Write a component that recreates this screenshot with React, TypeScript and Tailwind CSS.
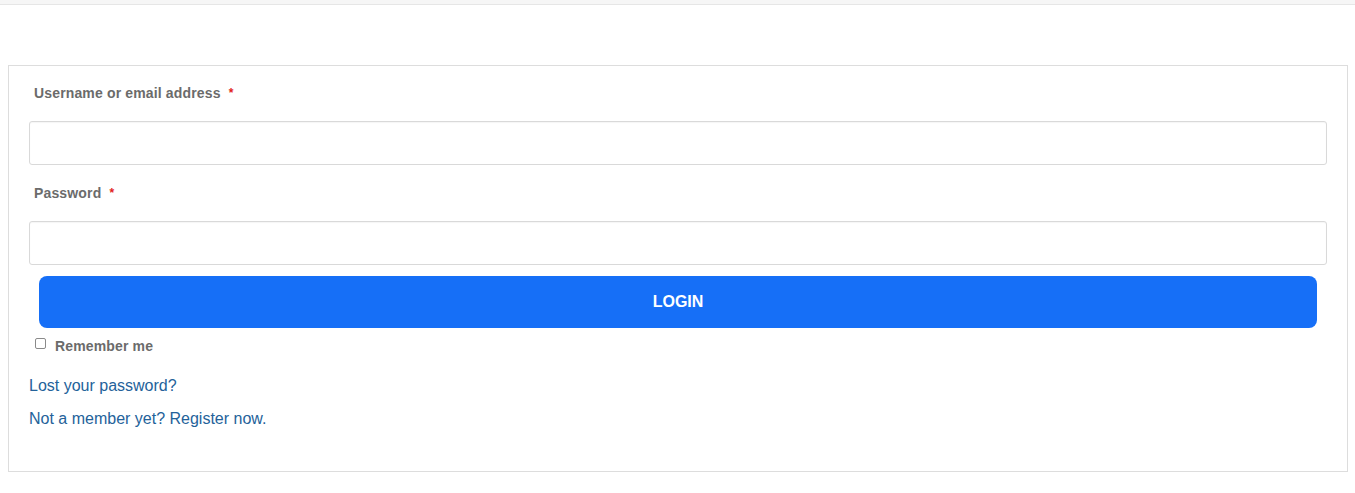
import React from "react";

export default function App() {
  return (
    <div className="w-[1355px] h-[493px] bg-white font-['Liberation_Sans',Arial,sans-serif] overflow-hidden">
      <div className="h-[5px] bg-[#f6f6f6] border-b border-[#e6e6e6]" />
      <div className="ml-2 mt-[60px] w-[1340px] h-[407px] border border-[#dddddd] px-5 pt-[17px]">
        <div className="pl-[5px] h-5 leading-5 text-[14px] font-bold text-[#6b6b6b] tracking-[0.15px]">
          Username or email address <span className="text-[#e2231a] ml-[4px] text-[12px] align-top">*</span>
        </div>
        <div className="mt-[18px] h-[44px] border border-[#d9d9d9] rounded-[3px] shadow-[inset_0_1px_1px_rgba(0,0,0,0.04)]" />
        <div className="mt-[18px] pl-[5px] h-5 leading-5 text-[14px] font-bold text-[#6b6b6b] tracking-[0.15px]">
          Password <span className="text-[#e2231a] ml-[4px] text-[12px] align-top">*</span>
        </div>
        <div className="mt-[18px] h-[44px] border border-[#d9d9d9] rounded-[3px] shadow-[inset_0_1px_1px_rgba(0,0,0,0.04)]" />
        <div className="mt-[11px] mx-[10px] h-[52px] rounded-[8px] bg-[#166ff7] flex items-center justify-center text-white text-[16px] font-bold">
          LOGIN
        </div>
        <div className="mt-2 h-5 flex items-start pl-[6px]">
          <span className="mt-[2px] w-[11px] h-[11px] border border-[#8a8a8a] rounded-[2px] bg-white" />
          <span className="ml-[9px] leading-5 text-[14px] font-bold text-[#6b6b6b] tracking-[0.15px]">Remember me</span>
        </div>
        <div className="mt-5 h-5 leading-5 text-[16px] text-[#24629a]">Lost your password?</div>
        <div className="mt-[13px] h-5 leading-5 text-[16px] text-[#24629a]">Not a member yet? Register now.</div>
      </div>
    </div>
  );
}
